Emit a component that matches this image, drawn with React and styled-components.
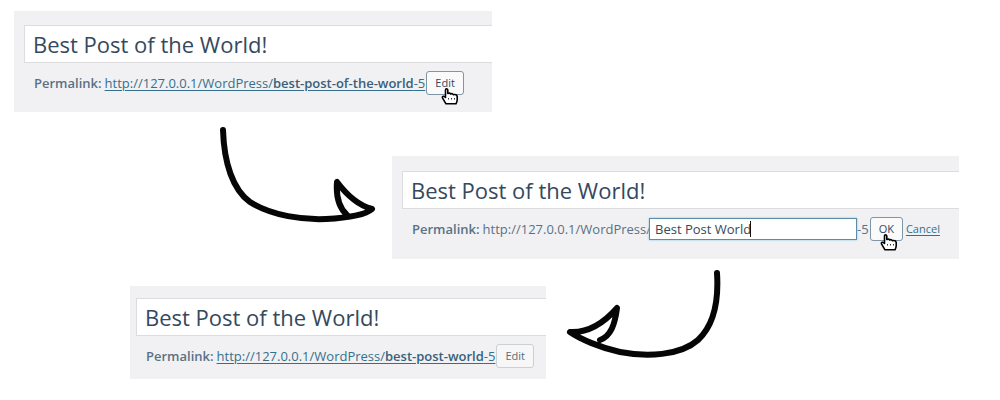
import React from "react";
import styled, { createGlobalStyle } from "styled-components";

const GlobalStyle = createGlobalStyle`
  *, *::before, *::after { box-sizing: border-box; }
  body {
    margin: 0;
    background: #fff;
    color: #5a7184;
    font-family: "Open Sans", "Noto Sans", sans-serif;
    font-size: 13px;
    line-height: 24px;
  }
`;

const Page = styled.main`
  padding-top: 11px;
  min-width: 960px;
`;

const Step = styled.section`
  display: flex;
  align-items: flex-start;
  padding-left: ${(p) => p.$indent || "0"};
`;

const ArrowCell = styled.div`
  flex: 0 0 39.2%;
  display: flex;
  justify-content: flex-end;
  padding: 14px 16px 0 0;
`;

const Arrow = styled.svg`
  flex: none;
  display: block;
  fill: none;
  stroke: #060606;
  stroke-width: 6;
  stroke-linecap: round;
  stroke-linejoin: round;
`;

const ReturnArrow = styled(Arrow)`
  margin: 8px 0 0 18px;
`;

const Panel = styled.form`
  flex: 0 0 ${(p) => p.$width};
  margin-top: ${(p) => p.$top || "0"};
  padding: ${(p) => p.$pad};
  background: #f1f1f3;
`;

const TitleInput = styled.input`
  display: block;
  width: 100%;
  height: 38px;
  padding: 0 8px;
  border: 1px solid #dcdcde;
  border-right: 0;
  border-radius: 0;
  outline: 0;
  background: #fff;
  color: #34495e;
  font: 400 22px/36px "Open Sans", "Noto Sans", sans-serif;
`;

const PermalinkRow = styled.div`
  display: flex;
  align-items: center;
  height: 24px;
  margin: 8px 0 0 10px;
  white-space: nowrap;
`;

const Label = styled.label`
  margin-right: 3px;
  font-weight: 600;
`;

const Link = styled.a`
  color: #34708c;
  text-decoration: underline;
  text-underline-offset: 2px;
  b { font-weight: 600; color: #38607a; }
`;

const CancelLink = styled(Link)`
  margin-left: 3px;
  font-size: 11px;
`;

const SlugField = styled.span`
  position: relative;
  display: block;
  width: 208px;
  height: 22px;
  margin-left: -2px;
`;

const SlugInput = styled.input`
  display: block;
  width: 100%;
  height: 100%;
  padding: 0 5px;
  border: 1px solid #5b8ca8;
  outline: 0;
  box-shadow: 0 0 2px #7fc4e0;
  background: #fff;
  color: #34495e;
  font: 400 13px/20px "Open Sans", "Noto Sans", sans-serif;
`;

const Caret = styled.span`
  position: absolute;
  top: 3px;
  left: 101px;
  width: 1px;
  height: 16px;
  background: #111;
`;

const ButtonWrap = styled.span`
  position: relative;
  display: block;
  margin-left: 1px;
`;

const SmallButton = styled.button`
  display: block;
  height: 24px;
  padding: 0 8px;
  border: 1px solid ${(p) => (p.$active ? "#7f95a8" : "#cbd0d5")};
  border-radius: 3px;
  background: ${(p) => (p.$active ? "#fafafa" : "#f7f7f7")};
  color: ${(p) => (p.$active ? "#34495e" : "#5a6c7c")};
  font: 400 11px/22px "Open Sans", "Noto Sans", sans-serif;
`;

const Pointer = styled.svg`
  position: absolute;
  right: 5px;
  top: 17px;
  display: block;
`;

function HandPointer() {
  return (
    <Pointer width="18" height="17" viewBox="0 0 18 17" aria-hidden="true">
      <path
        d="M4.5 9.5V2Q4.5 .8 5.5 .8T6.8 2V5.5Q9 4.5 9.6 6Q11.5 5 12.3 6.7Q15.8 6 16.2 8.5V12Q16 14 15 15.8H5L1.6 10.2Q1 8.2 2.5 8.2Q3.5 8.3 4.5 9.5Z"
        fill="#fff"
        stroke="#000"
        strokeWidth="1.6"
        strokeLinejoin="round"
      />
      <path d="M7.5 10V11.5M10.5 10V11.5M13.5 10V11.5" stroke="#333" strokeWidth="1" />
    </Pointer>
  );
}

function Button({ children, pointed, type = "button" }) {
  return (
    <ButtonWrap>
      <SmallButton type={type} $active={pointed}>{children}</SmallButton>
      {pointed && <HandPointer />}
    </ButtonWrap>
  );
}

function Editor({ children, labelFor, ...layout }) {
  return (
    <Panel {...layout} onSubmit={(e) => e.preventDefault()}>
      <TitleInput aria-label="Post title" defaultValue="Best Post of the World!" />
      <PermalinkRow>
        <Label htmlFor={labelFor}>Permalink:</Label>
        {children}
      </PermalinkRow>
    </Panel>
  );
}

export default function App() {
  return (
    <Page>
      <GlobalStyle />
      <Step $indent="1.4%">
        <Editor $width="48.5%" $pad="14px 0 17px 10px" labelFor="link-before">
          <Link id="link-before" href="#before">
            http://127.0.0.1/WordPress/<b>best-post-of-the-world</b>-5
          </Link>
          <Button pointed>Edit</Button>
        </Editor>
      </Step>

      <Step>
        <ArrowCell>
          <Arrow width="158" height="98" viewBox="218 126 158 98" aria-hidden="true">
            <path d="M223 130C224 163 233 190 250 202C272 216 304 220 326 219C346 218 364 216 372 209C357 205 346 194 337 182C336 195 338 207 347 215" />
          </Arrow>
        </ArrowCell>
        <Editor $width="56.7%" $top="44px" $pad="15px 0 18px 10px" labelFor="slug">
          <span>http://127.0.0.1/WordPress/</span>
          <SlugField>
            <SlugInput id="slug" defaultValue="Best Post World" />
            <Caret />
          </SlugField>
          <span>-5</span>
          <Button type="submit" pointed>OK</Button>
          <CancelLink href="#cancel">Cancel</CancelLink>
        </Editor>
      </Step>

      <Step $indent="13%">
        <Editor $width="47.8%" $top="27px" $pad="12px 0 11px 6px" labelFor="link-after">
          <Link id="link-after" href="#after">
            http://127.0.0.1/WordPress/<b>best-post-world</b>-5
          </Link>
          <Button>Edit</Button>
        </Editor>
        <ReturnArrow width="158" height="92" viewBox="564 267 158 92" aria-hidden="true">
          <path d="M717 273C719 304 712 327 698 340C680 356 646 357 620 352C601 348 580 339 570 332C588 333 603 324 617 308C615 324 611 336 600 340" />
        </ReturnArrow>
      </Step>
    </Page>
  );
}
